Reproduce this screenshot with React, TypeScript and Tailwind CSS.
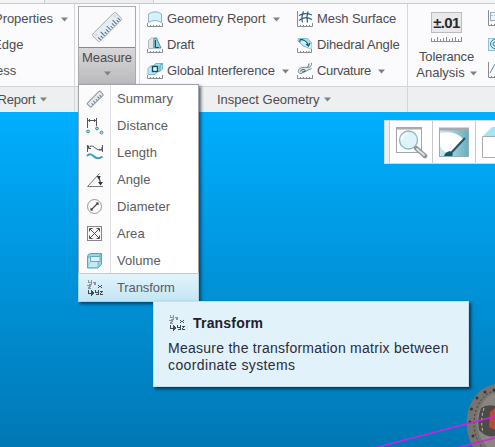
import React from "react";

const Caret = ({ className = "" }: { className?: string }) => (
  <svg width="7" height="5" viewBox="0 0 7 5" className={"shrink-0 " + className}>
    <path d="M0 0.5H7L3.5 4.5Z" fill="#808085" />
  </svg>
);

const Ticks = () => (
  <path d="M.5 12V15.5H15.5V12M3.5 14v1M6.5 14v1M9.5 14v1M12.5 14v1" stroke="#8a8b8f" fill="none" />
);

const Ruler = ({ size }: { size: number }) => (
  <svg width={size} height={size} viewBox="0 0 32 32" className="shrink-0">
    <g transform="rotate(-45 16 16)">
      <rect x="-1.5" y="10.5" width="35" height="11" rx="1" fill="#e6eef3" stroke="#a3a5a9" />
      <path d="M1.5 21v-4M4.5 21v-3M7.5 21v-6M10.500 21v-3M13.5 21v-4M16.5 21v-6M19.5 21v-3M22.5 21v-4M25.5 21v-6M28.5 21v-3M31 21v-4" stroke="#4c6f94" strokeWidth="1.1" />
      <circle cx="1.500" cy="13.500" r="1" fill="#fff" stroke="#aaa" strokeWidth=".5" />
      <circle cx="30.500" cy="13.500" r="1" fill="#fff" stroke="#aaa" strokeWidth=".5" />
    </g>
  </svg>
);

const SmallRuler = () => (
  <svg width="18" height="18" viewBox="0 0 18 18">
    <g transform="rotate(-45 9 9)">
      <rect x="0" y="6.5" width="18" height="5.500" rx=".8" fill="#e5ebef" stroke="#929498" />
      <path d="M3.500 11.5V9.500M6.500 11.5V9M9.500 11.5V9.500M12.500 11.5V9M15 11.5V9.500" stroke="#62788c" />
    </g>
  </svg>
);

const Svg16 = ({ children }: { children: React.ReactNode }) => (
  <svg width="16" height="17" viewBox="0 0 16 17" className="shrink-0" fill="none">{children}</svg>
);

const GeometryIcon = () => (
  <Svg16>
    <path d="M1.500 11.500V3Q8-1.500 14.500 3V11.500Q8 7.500 1.500 11.500Z" fill="#d3f3fb" stroke="#8fb3c0" />
    <Ticks />
  </Svg16>
);
const DraftIcon = () => (
  <Svg16>
    <path d="M1.500 11.500V3.500L4.500 1H10L6.500 3.500V11.500Z" fill="#e3e4e6" stroke="#b4b7ba" />
    <path d="M7 11V1.500L9.500 1L14 11Z" fill="#8fd2e6" stroke="#5a8b9d" />
    <path d="M8.500 3V10.500H12" stroke="#174d65" />
    <Ticks />
  </Svg16>
);
const InterferenceIcon = () => (
  <Svg16>
    <path d="M6.500 2.500L9 .5H15.500V6L13 8.500H6.500Z" fill="#a5e5f3" stroke="#70b8ca" />
    <path d="M13 2.500V8M13 2.500L15.500 .5" stroke="#4f9bae" />
    <path d="M1 5.500L3.500 3H10V9L8 11.500H1Z" fill="#bcebf5" stroke="#7ab6c7" />
    <rect x="5.500" y="3.500" width="5" height="5" fill="#e9fbff" stroke="#164d69" strokeWidth="1.400" />
    <Ticks />
  </Svg16>
);
const MeshIcon = () => (
  <Svg16>
    <path d="M2 4.500Q8 1 15 4M2 9.500Q8 4.500 15 8.500" stroke="#2b6582" strokeWidth="1.200" />
    <path d="M5.500 11.500Q4 6 6.500 .5M10.500 11.500Q9 6 11 .5" stroke="#24516a" strokeWidth="1.100" />
    <path d="M.5 0V15.500H15.500V12M3.500 14v1M6.500 14v1M9.500 14v1M12.500 14v1" stroke="#8a8b8f" />
  </Svg16>
);
const DihedralIcon = () => (
  <Svg16>
    <path d="M1 1.500H10.500L14.500 5.500V12L6 9L1 4Z" fill="#a5def0" stroke="#8abfd1" />
    <path d="M1 1.500L5 7L14.500 12V7Z" fill="#c8f2fa" />
    <path d="M3 2.500H6M3 2.500V5M3 2.500Q10 3 11.500 8.500M9 7L11.500 9L13 6" stroke="#195c78" strokeWidth="1.200" />
    <path d="M.5 11V15.500H14.500V12M3.500 14v1M6.500 14v1M9.500 14v1M12 14v1" stroke="#8a8b8f" />
  </Svg16>
);
const CurvatureIcon = () => (
  <Svg16>
    <path d="M14.500 0Q15 3.500 11 4.500Q3 3.500 1.500 7Q.5 10.500 4 10.500L14.500 5.500" fill="#e0e7e9" stroke="#7b8a90" />
    <path d="M12 .5Q12 3 10.500 4M3.500 8.500Q4 6 7 6.500Q9 7 8 8.500L5 9" stroke="#45616d" />
    <Ticks />
  </Svg16>
);

const Tool = ({ icon, label, caret, text = "tracking-[-0.08px]", gap = "ml-[7px]" }: { icon: React.ReactNode; label: string; caret?: boolean; text?: string; gap?: string }) => (
  <div className="flex h-[26px] items-center whitespace-nowrap">
    {icon}
    <span className={"ml-1 " + text}>{label}</span>
    {caret && <Caret className={gap} />}
  </div>
);

const DistanceIcon = () => (
  <svg width="18" height="18" viewBox="0 0 18 18" fill="none">
    <path d="M1.500 1V11M10.500 1V9M2 3.500H10M4 2L2.500 3.500L4 5M8 2L9.500 3.500L8 5" stroke="#55565b" />
    <circle cx="2" cy="14.500" r="1.400" fill="#b5e1f4" stroke="#3188ac" />
    <circle cx="11" cy="11.500" r="1.400" fill="#b5e1f4" stroke="#3188ac" />
    <circle cx="15.500" cy="15.500" r="1.400" fill="#b5e1f4" stroke="#3188ac" />
  </svg>
);
const LengthIcon = () => (
  <svg width="18" height="18" viewBox="0 0 18 18" fill="none">
    <path d="M1.500 1V8M16.500 1V8M2 4.500Q5 0 8.500 3.500T16 5.500M2.500 1.500V4.500H5M13 6H16V3" stroke="#55565b" />
    <path d="M1 12Q4.500 8.500 8 12.500Q11.500 16 16.500 12.500" stroke="#3b9abe" strokeWidth="2" />
  </svg>
);
const AngleIcon = () => (
  <svg width="18" height="18" viewBox="0 0 18 18" fill="none">
    <path d="M13.500 2.500L1.500 15.500H17" stroke="#77787c" />
    <path d="M12.500 6.500Q14.500 9 14.500 13" stroke="#3b3c40" strokeWidth="1.200" />
    <path d="M10.500 5L14.500 5L13.500 9ZM12 11L14.500 14.500L17 11Z" fill="#333438" />
  </svg>
);
const DiameterIcon = () => (
  <svg width="18" height="18" viewBox="0 0 18 18" fill="none">
    <circle cx="8.500" cy="8.500" r="7" fill="#fbfbfb" stroke="#97989c" />
    <path d="M5 12L12 5" stroke="#44454a" strokeWidth="1.100" />
    <path d="M4.500 9.500V12.500H7.500ZM9.500 4.500H12.500V7.500Z" fill="#333438" />
  </svg>
);
const AreaIcon = () => (
  <svg width="18" height="18" viewBox="0 0 18 18" fill="none">
    <rect x="1.500" y="1.500" width="14" height="14" fill="#f8f8f8" stroke="#85868a" />
    <path d="M4 4L13 13M13 4L4 13M3.500 6.500V3.500H6.500M10.500 3.500H13.500V6.500M13.500 10.500V13.500H10.500M6.500 13.500H3.500V10.500" stroke="#4b4c50" />
  </svg>
);
const VolumeIcon = () => (
  <svg width="18" height="18" viewBox="0 0 18 18" fill="none">
    <path d="M1.500 5Q1.500 1.500 5 1.500H15.500V12L12 16H1.500Z" fill="#9bd5e6" stroke="#5ba3ba" />
    <path d="M1.500 5H12V16M12 5L15.500 1.500" stroke="#6bb0c5" />
    <rect x="2.500" y="6" width="9" height="9" fill="#c2eaf4" />
    <path d="M4.500 4.500H14V9.500H4.500Z" fill="#d9f3fa" stroke="#65a9bc" />
    <path d="M4.500 9.500L2 14" stroke="#8dc9da" />
  </svg>
);
const TransformIcon = () => (
  <svg width="18" height="18" viewBox="0 0 18 18" fill="none" shapeRendering="crispEdges">
    <path d="M2.500 1v2h3M5.500 1v4h-3M1 6.500h3v1h-1v1h-1v1h3M7 3h1v1h1v1h1M9.500 3h-1M7.500 5.500h1" stroke="#8d9499" />
    <path d="M2.500 11v3H6M9.500 11v2.500h2.500M12.500 11v4.500H10M12 6.500h1M15 6.500h1M13 7.500h2M12 8.500h1M15 8.500h1M14 12.500h3M16 13.500h-1M15 14.500h-1M14 15.500h3" stroke="#44494d" />
    <path d="M5 11L8.500 14L5 17Z" fill="#44494d" />
  </svg>
);

const menu = [
  { label: "Summary", icon: <SmallRuler /> },
  { label: "Distance", icon: <DistanceIcon /> },
  { label: "Length", icon: <LengthIcon /> },
  { label: "Angle", icon: <AngleIcon /> },
  { label: "Diameter", icon: <DiameterIcon /> },
  { label: "Area", icon: <AreaIcon /> },
  { label: "Volume", icon: <VolumeIcon /> },
  { label: "Transform", icon: <TransformIcon />, active: true },
];

const Footer = ({ children }: { children?: React.ReactNode }) => (
  <div className="flex h-[26px] items-center border-t border-[#d2d3d7] bg-[#eeeff1] whitespace-nowrap">{children}</div>
);

const Ribbon = () => (
  <div className="flex h-[112px] shrink-0 flex-col bg-[#fbfbfd]">
    <div className="flex h-1 border-b border-[#c9cacd] bg-[#f4f5f7]">
      <div className="w-[45px] border-r border-[#c9cacd]" />
      <div className="w-[109px] border-r border-[#c9cacd] bg-[#eeeff1]" />
    </div>
    <div className="flex flex-1">
      <div className="flex w-[75px] shrink-0 flex-col border-r border-[#d6d7da]">
        <div className="flex h-[82px] flex-col pt-[2px]">
          <div className="flex h-[26px] items-center"><span className="-ml-[6px] tracking-[-0.04px]">Properties</span><Caret className="ml-[8px]" /></div>
          <div className="flex h-[26px] items-center"><span className="-ml-[7px]">Edge</span></div>
          <div className="flex h-[26px] items-center"><span className="-ml-[1px] tracking-[-0.8px]"> </span><span className="-ml-[3px]">ess</span></div>
        </div>
        <Footer><span className="-ml-[2.500px] tracking-[-0.2px]">Report</span><Caret className="ml-[5px]" /></Footer>
      </div>
      <div className="flex w-[333px] shrink-0 flex-col border-r border-[#d6d7da]">
        <div className="flex h-[82px]">
          <div className="mt-[2px] ml-[3px] flex h-[80px] w-[58px] shrink-0 flex-col border border-[#a9aaae]">
            <div className="flex h-[41px] items-center justify-center border-b border-[#88898d] bg-[#fafafc]"><Ruler size={30} /></div>
            <div className="flex flex-1 flex-col items-center bg-linear-to-b from-[#d8d8da] to-[#b9b9bd] pt-[1px]">
              <span className="leading-[18px] tracking-[-0.1px]">Measure</span>
              <Caret className="mt-[4px]" />
            </div>
          </div>
          <div className="ml-[3px] w-px shrink-0 bg-[#dddee1]" />
          <div className="flex w-[142px] shrink-0 flex-col pt-[2px] pl-[7px]">
            <Tool icon={<GeometryIcon />} label="Geometry Report" caret />
            <Tool icon={<DraftIcon />} label="Draft" text="tracking-[-0.2px]" />
            <Tool icon={<InterferenceIcon />} label="Global Interference" text="tracking-[-0.15px]" caret />
          </div>
          <div className="flex flex-col pt-[2px] pl-[15px]">
            <Tool icon={<MeshIcon />} label="Mesh Surface" />
            <Tool icon={<DihedralIcon />} label="Dihedral Angle" text="tracking-[-0.15px]" />
            <Tool icon={<CurvatureIcon />} label="Curvature" text="tracking-[-0.35px]" caret />
          </div>
        </div>
        <Footer><span className="ml-[142px]">Inspect Geometry</span><Caret className="ml-[4px]" /></Footer>
      </div>
      <div className="flex w-[87px] shrink-0 flex-col">
        <div className="flex h-[82px]">
          <div className="flex w-[77px] shrink-0 flex-col items-center pt-[8px]">
            <div className="flex h-[21px] w-[31px] items-center justify-center border border-[#bbbcbf] bg-[#e9e9eb] text-[15px] font-bold tracking-[-0.6px] text-[#28292d]">±.01</div>
            <svg width="31" height="6" viewBox="0 0 31 6" className="mt-[3px]">
              <path d="M0 5.500H31M.5 2v3M3.500 3v2M6.500 1v4M9.500 3v2M12.500 2v3M15.500 1v4M18.500 3v2M21.500 2v3M24.500 1v4M27.500 3v2M30.500 1v4" stroke="#8a8b8f" fill="none" />
            </svg>
            <div className="mt-[7px] leading-4 tracking-[-0.15px]">Tolerance</div>
            <div className="flex items-center leading-4"><span>Analysis</span><Caret className="ml-[5px]" /></div>
          </div>
          <div className="flex w-[10px] shrink-0 flex-col gap-[9px] overflow-hidden pt-[6px] pl-[3px]">
            <Svg16><path d="M.5 0V15.500H16M3.500 14v1M6.500 14v1" stroke="#8a8b8f" /><rect x="2.500" y="2.500" width="13" height="8" fill="#eaf6fa" stroke="#9aacb3" /><path d="M3 5.500H12" stroke="#8ccbdc" strokeDasharray="2 1" /></Svg16>
            <Svg16><rect x=".5" y="2.500" width="15" height="12" fill="#d9f3fa" stroke="#8dc0d2" /><circle cx="7" cy="8" r="4.500" stroke="#2e7798" /><circle cx="7" cy="8" r="2" stroke="#2e7798" /></Svg16>
            <Svg16><path d="M.5 0V15.500H16M3.500 14v1M6.500 14v1" stroke="#8a8b8f" /><path d="M2 11L7 2L11 7" stroke="#4097b8" /></Svg16>
          </div>
        </div>
        <Footer />
      </div>
    </div>
  </div>
);

const ViewBar = () => (
  <div className="absolute top-[120px] left-[384px] flex h-[44px] w-[140px] border border-[#d1d8dd] bg-white">
    <div className="w-[5px] shrink-0 border-r border-[#c8c9cc] bg-[#eeeff1]" />
    <div className="flex w-[43px] shrink-0 justify-center border-r border-[#c8c9cc] pt-[5px]">
      <svg width="34" height="34" viewBox="0 0 34 34" fill="none">
        <rect x="2.500" y="1.500" width="25" height="25" fill="#fff" stroke="#a5a6a9" />
        <path d="M2 2.500H28" stroke="#aaa" strokeWidth="2" />
        <path d="M22 22L31 30" stroke="#929397" strokeWidth="4.500" strokeLinecap="round" />
        <path d="M23 23L30 29" stroke="#e1e1e4" strokeWidth="2" strokeLinecap="round" />
        <circle cx="14.500" cy="14" r="9" fill="#dff4fa" stroke="#8bb6c5" strokeWidth="1.300" />
        <path d="M8 14Q8 8 14 7.500" stroke="#fff" strokeWidth="2" />
      </svg>
    </div>
    <div className="flex w-[43px] shrink-0 justify-center border-r border-[#c8c9cc] pt-[6px]">
      <svg width="30" height="31" viewBox="0 0 30 31" fill="none">
        <defs><linearGradient id="brush"><stop stopColor="#c9e9ef" /><stop offset="1" stopColor="#68aebf" /></linearGradient></defs>
        <rect x=".5" y="1.500" width="29" height="28" fill="url(#brush)" stroke="#91afba" />
        <path d="M1 6Q17 3 24 12L10 27Q4 25 1 19Z" fill="#fff" />
        <path d="M0 2H30" stroke="#aaaaad" strokeWidth="3" />
        <path d="M26 11L12 26" stroke="#1e5366" strokeWidth="2" />
        <path d="M5 29Q6 25 11 24L14 27L13 29Z" fill="#15566b" />
      </svg>
    </div>
    <svg width="30" height="34" viewBox="0 0 30 34" className="mt-[5px] ml-[6px] shrink-0">
      <path d="M.5 10.500L10 1H30V10.500Z" fill="#a2e7f4" />
      <path d="M.5 10.500H30V31.500H.5Z" fill="#fff" stroke="#aaa" />
    </svg>
  </div>
);

const Menu = () => (
  <div className="absolute top-[84px] left-[78px] w-[121px] border border-[#a2a4a8] bg-white text-[#5b5b60] shadow-[2px_2px_3px_rgba(0,25,50,.65)]">
    {menu.map((m) => (
      <div key={m.label} className={m.active ? "flex h-[27px] items-center bg-linear-to-b from-[#e2f4fb] to-[#c3e6f4] outline outline-[#a9d3e3]" : "flex h-[27px] items-center"}>
        <div className={m.active ? "flex h-full w-8 items-center justify-center" : "flex h-full w-8 items-center justify-center border-r border-[#dcdde0] bg-[#fbfbfc]"}>{m.icon}</div>
        <span className={m.active ? "ml-[6px] tracking-[-0.1px]" : "ml-[6px] tracking-[0.05px]"}>{m.label}</span>
      </div>
    ))}
  </div>
);

const Tooltip = () => (
  <div className="absolute top-[301px] left-[153px] h-[86px] w-[316px] border border-[#c7dfeb] bg-[#e2f2fb] pt-[11px] pl-[14px] text-[#2b2c38] shadow-[2px_2px_3px_rgba(0,25,45,.75)]">
    <div className="flex h-[20px] items-center gap-[7px]"><TransformIcon /><b className="text-[14px] tracking-[0.2px] text-[#20212c]">Transform</b></div>
    <p className="mt-[7px] text-[14px] leading-[17px] whitespace-nowrap">
      <span className="tracking-[0.26px]">Measure the transformation matrix between</span><br />
      <span className="tracking-[0.38px]">coordinate systems</span>
    </p>
  </div>
);

const Model = () => (
  <svg className="absolute inset-0" width="495" height="447" viewBox="0 0 495 447" fill="none">
    <ellipse cx="498" cy="423" rx="31.500" ry="39" fill="#77736f" />
    <ellipse cx="500" cy="423" rx="26" ry="33" stroke="#3f3b3a" strokeDasharray="2 2" />
    <ellipse cx="501" cy="422" rx="24" ry="30" fill="#89857f" />
    <path d="M481 408Q487 404 495 406V436Q486 438 479 430Q477 418 481 408Z" fill="#4e4a48" />
    <path d="M484 408Q480 420 483 433" stroke="#c7beb2" strokeDasharray="3 2" />
    <path d="M490 412L495 408V430L489 427Z" fill="#b34c3c" />
    <g fill="#373436"><circle cx="485" cy="392" r="1.500" /><circle cx="477" cy="398" r="1.500" /><circle cx="471.500" cy="409" r="1.500" /><circle cx="470" cy="422" r="1.500" /><circle cx="473" cy="436" r="1.500" /><circle cx="494" cy="390" r="1.500" /></g>
    <path d="M376 447.500L495 416.500M458 447.500L495 438" stroke="#d51ce8" strokeWidth="1.500" />
  </svg>
);

export default function App() {
  return (
    <div className="relative flex h-[447px] w-[495px] flex-col overflow-hidden bg-white font-['Liberation_Sans',Arial,sans-serif] text-[13px] leading-4 text-[#4b4b50]">
      <Ribbon />
      <div className="flex-1 bg-linear-to-b from-[#00afff] to-[#0078b5]" />
      <Model />
      <ViewBar />
      <Menu />
      <Tooltip />
    </div>
  );
}
